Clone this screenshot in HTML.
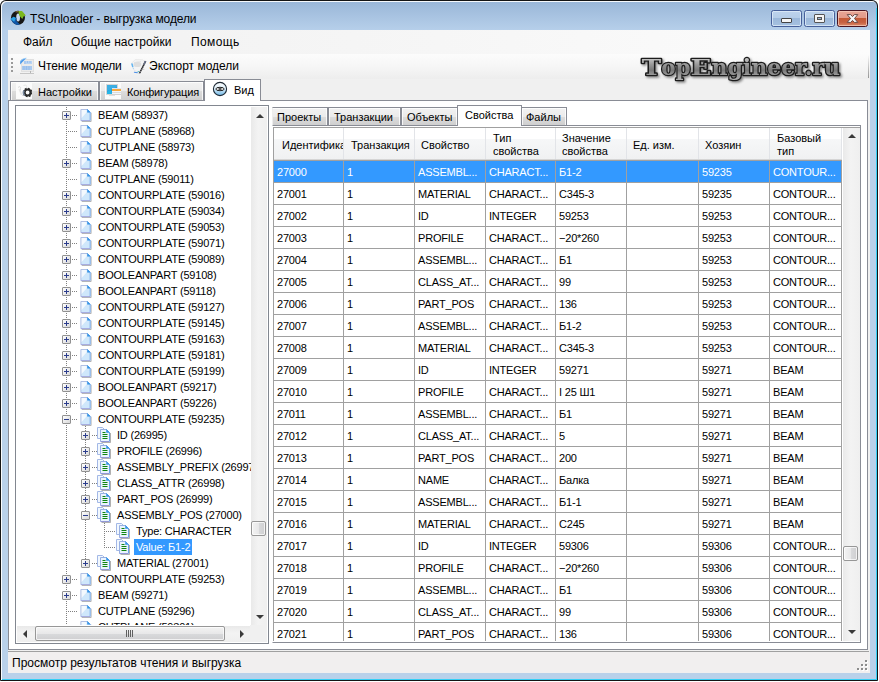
<!DOCTYPE html><html lang="ru"><head><meta charset="utf-8"><title>TSUnloader - выгрузка модели</title><style>
html,body{margin:0;padding:0;background:#fff;}
body{width:879px;height:682px;overflow:hidden;position:relative;font-family:"Liberation Sans",sans-serif;font-size:11px;color:#000;}
*{box-sizing:border-box;}
b,i{font-weight:normal;font-style:normal;display:block;}
.a{position:absolute;}
#win{position:absolute;left:0;top:0;width:878px;height:681px;background:linear-gradient(#9ab7d8 0,#9ab7d8 2px,#b6cfea 30px,#b9d1ea 60px);box-shadow:inset 0 0 0 1px #141414, inset 1px 1px 0 1px rgba(255,255,255,.9);border-radius:6px 6px 1px 1px;}
#ttl{letter-spacing:-0.1px;left:30px;top:12px;font-size:12px;line-height:14px;white-space:nowrap;}
#client{left:8px;top:30px;width:862px;height:643px;background:#f0f0f0;}
.ui{font-size:12px;line-height:14px;white-space:nowrap;position:absolute;}
#menu{left:8px;top:30px;width:862px;height:24px;background:linear-gradient(90deg,#f1f1f1,#f6f6f6 50%,#fcfcfc);}
#tool{left:8px;top:54px;width:862px;height:25px;background:linear-gradient(#fcfcfc,#f6f6f6 50%,#ededed);}
/* caption buttons */
.cb{position:absolute;top:10px;height:17px;border:1px solid #46609a;border-radius:2.5px;background:linear-gradient(#bdd3ec 0,#b5cde8 47%,#9bb8da 48%,#a6c1e0 100%);box-shadow:inset 0 0 0 1px rgba(225,238,250,.75);}
.cb.x{border-color:#4a1420;background:linear-gradient(#e8a696 0,#e29a88 47%,#c45a36 48%,#c66040 75%,#dc8a68 100%);box-shadow:inset 0 0 0 1px rgba(248,208,192,.7);}
/* tabs */
.tab{position:absolute;height:19px;border:1px solid #898c95;border-bottom:none;background:linear-gradient(#f2f2f2 0,#ebebeb 50%,#dddddd 51%,#cfcfcf 100%);box-shadow:inset 1px 1px 0 rgba(255,255,255,.8),inset -1px 0 0 rgba(255,255,255,.8);font-size:11px;line-height:13px;white-space:nowrap;}
.tab.on{background:#fff;box-shadow:none;}
.tab span{position:absolute;}
#page{left:8px;top:100px;width:860px;height:550px;background:#fff;border:1px solid #898c95;}
#page2{left:272px;top:125px;width:589px;height:518px;background:#fff;border:1px solid #898c95;border-left-color:#fff;}
/* tree */
#treeb{left:15px;top:105px;width:254px;height:539px;border:1px solid #828790;background:#fff;}
#tree{position:absolute;left:16px;top:106px;width:252px;height:537px;overflow:hidden;background:#fff;}
#tree .tx{letter-spacing:-0.2px;position:absolute;height:16px;line-height:16px;padding:0 3px;white-space:nowrap;font-size:11px;}
#tree .tx.sel{background:#3399ff;color:#fff;padding:0 2px;}
#tree .hl{position:absolute;height:1px;background-image:linear-gradient(90deg,#808080 50%,transparent 50%);background-size:2px 1px;}
#tree .vl{position:absolute;width:1px;background-image:linear-gradient(#808080 50%,transparent 50%);background-size:1px 2px;}
#tree .bx{position:absolute;width:9px;height:9px;border:1px solid #919191;border-radius:1px;background:linear-gradient(135deg,#fff,#d8d8d8);}
#tree .bx:before{content:"";position:absolute;left:1px;top:3px;width:5px;height:1px;background:#2b3c8c;}
#tree .bx.p:after{content:"";position:absolute;left:3px;top:1px;width:1px;height:5px;background:#2b3c8c;}
#tree .ic{position:absolute;width:12px;height:13px;}
/* grid */
#grid{position:absolute;left:273px;top:127px;width:587px;height:514px;overflow:hidden;background:#fff;border-left:1px solid #a0a0a0;border-top:1px solid #a0a0a0;}
#grid .hd{position:absolute;top:0;height:31px;background:linear-gradient(#fff 0,#fff 36%,#f6f7f8 37%,#f0f1f2 100%);border-right:1px solid #e2e4e8;font-size:11px;line-height:13px;white-space:nowrap;overflow:hidden;}
#grid .hd span{position:absolute;left:8px;top:11px;}
#grid .hd.two span{top:4px;}
#grid .rw{position:absolute;left:0;width:568px;height:22px;border-bottom:1px solid #a0a0a0;}
#grid .rw.sel{background:#3399ff;color:#fff;}
#grid .c{letter-spacing:-0.2px;position:absolute;top:0;height:21px;line-height:22.5px;padding-left:3px;white-space:nowrap;overflow:hidden;font-size:11px;}
#grid .gl{position:absolute;top:33px;width:1px;height:481px;background:#a0a0a0;}
#status{left:8px;top:651px;width:861px;height:22px;background:#f1efef;border-top:1px solid #a0a0a0;}
/* scrollbars */
.sb{position:absolute;background:#f0f0f0;}
.thumb{position:absolute;border:1px solid #979797;border-radius:2px;background:linear-gradient(90deg,#f3f3f3 0,#e8e8e9 50%,#d9dadc 51%,#cfcfd1 100%);box-shadow:inset 0 0 0 1px rgba(255,255,255,.7);}
.thumbh{position:absolute;border:1px solid #979797;border-radius:2px;background:linear-gradient(#f3f3f3 0,#e8e8e9 50%,#d9dadc 51%,#cfcfd1 100%);box-shadow:inset 0 0 0 1px rgba(255,255,255,.7);}
.ar{position:absolute;width:0;height:0;border:4px solid transparent;}

</style></head><body>
<div id="win"></div>
<i class="a" style="left:876px;top:8px;width:1px;height:672px;background:#35cff5"></i>
<i class="a" style="left:2px;top:679px;width:875px;height:1px;background:#35cff5"></i>
<svg class="a" style="left:9px;top:9px" width="18" height="18" viewBox="0 0 18 18"><circle cx="9" cy="8.8" r="7" fill="#161616"/><ellipse cx="9.1" cy="8.6" rx="1.9" ry="4" fill="#c6d7eb"/><path d="M9.3 1.9L13 2.1L16.9 6.6L14.7 7.2L13.3 9.9L10.6 7L9.7 4.2Z" fill="#7cb81e"/><path d="M1.5 10L4.6 7.7L7.6 9L7.4 12L9.8 14.2L11 15.6L7.6 15.9L4.2 13.8Z" fill="#0f56a8"/><path d="M1.5 10L4.6 7.7L6.8 9L5.2 12.8Z" fill="#2aa3e4"/><path d="M6.2 2.6L9 1.9L9.5 3.2L6.8 3.6Z" fill="#8a6a3a"/></svg>
<div id="ttl" class="a">TSUnloader - выгрузка модели</div>
<div class="cb" style="left:771px;width:31px"><i class="a" style="left:9px;top:7px;width:11px;height:5px;background:#f6f6f6;border:1px solid #444;border-radius:1px"></i></div>
<div class="cb" style="left:804px;width:31px"><i class="a" style="left:9px;top:3px;width:11px;height:9px;background:#f4f4f4;border:1px solid #555;border-radius:1px"></i><i class="a" style="left:12px;top:6px;width:5px;height:3px;background:#9db6d6;border:1px solid #555"></i></div>
<div class="cb x" style="left:837px;width:31px"><svg class="a" style="left:8px;top:2px" width="13" height="11" viewBox="0 0 13 11"><path d="M1.2 1.6H4.7L6.5 3.6L8.3 1.6H11.8L8.5 5.5L11.8 9.4H8.3L6.5 7.4L4.7 9.4H1.2L4.5 5.5Z" fill="#f6f6f6" stroke="#6a4a46" stroke-width="1" stroke-linejoin="round"/></svg></div>
<div id="client" class="a"></div>
<div id="menu" class="a"></div>
<div class="ui" style="left:23px;top:35px">Файл</div>
<div class="ui" style="left:71px;top:35px;letter-spacing:.06px">Общие настройки</div>
<div class="ui" style="left:191px;top:35px;letter-spacing:.4px">Помощь</div>
<div id="tool" class="a"></div>
<i class="a" style="left:868px;top:55px;width:1px;height:23px;background:linear-gradient(rgba(150,150,150,0),rgba(140,140,140,.9))"></i>
<i class="a" style="left:11px;top:58px;width:2px;height:16px;background-image:linear-gradient(#9a9a9a 50%,transparent 50%);background-size:2px 4px;"></i>
<div class="ui" style="left:38px;top:59px;letter-spacing:-0.1px">Чтение модели</div>
<div class="ui" style="left:149px;top:59px">Экспорт модели</div>
<svg id="logo" class="a" style="left:630px;top:45px" width="230" height="46" viewBox="0 0 230 46"><defs><linearGradient id="lg" x1="0" y1="0" x2="0" y2="46" gradientUnits="userSpaceOnUse"><stop offset=".26" stop-color="#d0d0d0"/><stop offset=".42" stop-color="#9a9a9a"/><stop offset=".55" stop-color="#787878"/><stop offset=".66" stop-color="#9c9c9c"/><stop offset=".8" stop-color="#b8b8b8"/></linearGradient><filter id="ls" x="-5%" y="-20%" width="110%" height="150%"><feDropShadow dx="1.5" dy="1.5" stdDeviation="1.2" flood-color="#000" flood-opacity=".45"/></filter></defs><text y="29.6" font-family="'DejaVu Serif','Liberation Serif',serif" font-weight="bold" font-size="22.5" fill="url(#lg)" stroke="#1c1c1c" stroke-width="2.6" stroke-linejoin="round" paint-order="stroke" filter="url(#ls)"><tspan x="11.8" textLength="19.4" lengthAdjust="spacingAndGlyphs">T</tspan><tspan x="31.2" textLength="29.4" lengthAdjust="spacingAndGlyphs">op</tspan><tspan x="60.6" textLength="20.8" lengthAdjust="spacingAndGlyphs">E</tspan><tspan x="81.4" textLength="128.6" lengthAdjust="spacingAndGlyphs">ngineer.ru</tspan></text></svg>
<div id="page" class="a"></div>
<div class="tab" style="left:10px;top:81px;width:89px"><span style="left:27px;top:4px">Настройки</span></div>
<div class="tab" style="left:99px;top:81px;width:105px"><span style="left:27px;top:4px;letter-spacing:-0.15px">Конфигурация</span></div>
<div class="tab on" style="left:204px;top:79px;width:57px;height:22px"><span style="left:29px;top:4px">Вид</span></div>
<div id="treeb" class="a"></div>
<div id="page2" class="a"></div>
<div class="tab" style="left:272px;top:107px;width:56px;height:18px;border-left-color:#ededed;box-shadow:inset -1px 0 0 rgba(255,255,255,.8),inset 0 1px 0 rgba(255,255,255,.8)"><span style="left:4px;top:3px">Проекты</span></div>
<div class="tab" style="left:328px;top:107px;width:73px;height:18px"><span style="left:5px;top:3px">Транзакции</span></div>
<div class="tab" style="left:401px;top:107px;width:57px;height:18px"><span style="left:5px;top:3px">Объекты</span></div>
<div class="tab" style="left:521px;top:107px;width:46px;height:18px"><span style="left:4px;top:3px">Файлы</span></div>
<div class="tab on" style="left:457px;top:105px;width:65px;height:21px"><span style="left:7px;top:3px">Свойства</span></div>

<svg class="a" style="left:19px;top:57px" width="17" height="18" viewBox="0 0 17 18"><rect x="2" y="2" width="13" height="13" fill="#ebebeb"/><rect x="2.5" y="2.5" width="12" height="12" fill="none" stroke="#e0e0e0"/><rect x="5" y="4" width="8" height="3" fill="#b9d4f3"/><rect x="3" y="9" width="10" height="4" fill="#a9c9ef"/><path d="M6 4V7M8.5 4V6M11 4V6M5 9V13M7.5 9V13M10 9V13" stroke="#8fb8ea" stroke-width=".7"/><path d="M1 7.6L1.3 3.9Q3.5 1.5 7.4 1.1Z" fill="#4797ea"/><path d="M1.3 3.9Q3.5 1.5 7.4 1.1" stroke="#9ccdf6" stroke-width=".8" fill="none"/><rect x="1" y="16" width="14" height="1" fill="#c6c6c6"/><rect x="11" y="14" width="1" height="2" fill="#b4b4b4"/></svg>
<svg class="a" style="left:130px;top:57px" width="18" height="18" viewBox="0 0 18 18"><path d="M1.6 6.2L5.2 2.6L12.6 2.8L15 5L9.4 15.4L4.2 13.4Z" fill="#f4f4f4" stroke="#e6e6e6" stroke-width=".8"/><ellipse cx="7.4" cy="7.4" rx="3.8" ry="2.6" fill="#d9d9d9" opacity=".85"/><path d="M4 5.6L11 4.6" stroke="#e0e0e0" stroke-width=".8"/><path d="M2 7L2.7 9.6" stroke="#62b4f0" stroke-width="1.5" stroke-linecap="round"/><circle cx="3.4" cy="11.6" r=".7" fill="#a8d4f8"/><path d="M4.4 15.2L7.4 15.7" stroke="#4a8ee6" stroke-width="1.1" stroke-linecap="round"/><circle cx="8.3" cy="14.6" r=".7" fill="#3cbcc4"/><path d="M15.6 4.2L9.4 16.6" stroke="#2c2c30" stroke-width="1.6" stroke-dasharray="1.5 .45"/><path d="M15.6 4.2L13.9 7.6" stroke="#66708a" stroke-width="1.6" stroke-dasharray="1.5 .45"/><path d="M13 12.4H14.4" stroke="#cfcfcf"/></svg>
<svg class="a" style="left:16px;top:83px" width="16" height="16" viewBox="0 0 16 16"><rect width="16" height="16" fill="#fbfbfb"/><path d="M2 4.5C3.5 3 5 3.5 4.5 5.5C4 8 5 11 7 13" fill="none" stroke="#dadada" stroke-width="1"/><path d="M7.5 2.5C10 1.5 11.5 2.5 10.5 4.5" fill="none" stroke="#e2e2e2" stroke-width=".8"/><path d="M3 6L5.5 12" stroke="#e6e6e6" stroke-width="1.2"/><circle cx="11.6" cy="9.5" r="3" fill="none" stroke="#2b2b2b" stroke-width="2.2"/><circle cx="11.6" cy="9.5" r="4.1" fill="none" stroke="#2b2b2b" stroke-width="1.4" stroke-dasharray="1.7 1.5"/><path d="M8.2 7.5A4 4 0 0 0 8.6 12.6" fill="none" stroke="#76869c" stroke-width="1.4"/></svg>
<svg class="a" style="left:105px;top:83px" width="16" height="16" viewBox="0 0 16 16"><rect width="16" height="16" fill="#fbfbfb"/><rect x="1.5" y="1.5" width="11" height="10" fill="#2f95d6" stroke="#d6d6d6"/><path d="M2 2H12V4L2 8Z" fill="#3fb4e6" opacity=".8"/><path d="M2 9L6 6L7 11H2Z" fill="#1fc4ee" opacity=".7"/><rect x="7" y="6" width="9" height="2" fill="#f8a93c"/><rect x="7" y="5" width="9" height="1" fill="#d8e6f4"/><rect x="7" y="8" width="9" height="3" fill="#f1f5fb"/><rect x="7" y="9" width="9" height="1" fill="#dcdcdc"/><rect x="7" y="11" width="9" height="1" fill="#d0d0d0"/><rect x="4" y="12" width="6" height="1" fill="#e0e0e0"/></svg>
<svg class="a" style="left:212px;top:81px" width="16" height="16" viewBox="0 0 16 16"><defs><linearGradient id="eg" x1="0" y1="0" x2="0" y2="1"><stop offset="0" stop-color="#ffffff"/><stop offset=".45" stop-color="#dff0fa"/><stop offset="1" stop-color="#6fb7e6"/></linearGradient></defs><circle cx="8" cy="8" r="6.6" fill="url(#eg)" stroke="#1e2a36" stroke-width="1.1"/><ellipse cx="8" cy="8" rx="4.2" ry="1.7" fill="#f4f4f4" stroke="#222" stroke-width="1"/><ellipse cx="8" cy="8" rx="1.7" ry="1.3" fill="#555"/></svg>
<div id="status" class="a"></div>
<i class="a" style="left:866px;top:661px;width:2px;height:2px;background:#fff"></i><i class="a" style="left:865px;top:660px;width:2px;height:2px;background:#8c8c8c"></i><i class="a" style="left:862px;top:665px;width:2px;height:2px;background:#fff"></i><i class="a" style="left:861px;top:664px;width:2px;height:2px;background:#8c8c8c"></i><i class="a" style="left:866px;top:665px;width:2px;height:2px;background:#fff"></i><i class="a" style="left:865px;top:664px;width:2px;height:2px;background:#8c8c8c"></i><i class="a" style="left:858px;top:669px;width:2px;height:2px;background:#fff"></i><i class="a" style="left:857px;top:668px;width:2px;height:2px;background:#8c8c8c"></i><i class="a" style="left:862px;top:669px;width:2px;height:2px;background:#fff"></i><i class="a" style="left:861px;top:668px;width:2px;height:2px;background:#8c8c8c"></i><i class="a" style="left:866px;top:669px;width:2px;height:2px;background:#fff"></i><i class="a" style="left:865px;top:668px;width:2px;height:2px;background:#8c8c8c"></i>
<div class="ui" style="left:12px;top:656px">Просмотр результатов чтения и выгрузка</div>

<div id="tree">
<i class="vl" style="left:50px;top:1px;height:535px"></i>
<i class="vl" style="left:69px;top:320px;height:138px"></i>
<i class="vl" style="left:88px;top:415px;height:27px"></i>

<i class="hl" style="left:56px;top:9px;width:5px"></i>
<b class="bx p" style="left:46px;top:5px"></b>
<svg class="ic" style="left:64px;top:3px" width="12" height="14" viewBox="0 0 12 14"><path d="M1.5 13.5H11.5V4" fill="none" stroke="#9c9c9c" stroke-opacity=".8"/><path d="M.5 .5H7.5L10.5 3.5V12.5H.5Z" fill="#cfe7fb"/><path d="M.5 .5H7.5L8.5 1.5L.5 10.5Z" fill="#f4f9fe"/><path d="M.5 12.5V.5H7.5" fill="none" stroke="#a9b9e0"/><path d="M7.5 .5L10.5 3.5V12.5" fill="none" stroke="#6fa8ea"/><path d="M.5 12.5H10.5" fill="none" stroke="#9aa0dc"/><path d="M7.5 .5V3.5H10.5Z" fill="#3a94e6" stroke="#3a94e6" stroke-width=".6"/></svg>
<span class="tx" style="left:79px;top:1px">BEAM (58937)</span>
<i class="hl" style="left:52px;top:25px;width:9px"></i>
<svg class="ic" style="left:64px;top:19px" width="12" height="14" viewBox="0 0 12 14"><path d="M1.5 13.5H11.5V4" fill="none" stroke="#9c9c9c" stroke-opacity=".8"/><path d="M.5 .5H7.5L10.5 3.5V12.5H.5Z" fill="#cfe7fb"/><path d="M.5 .5H7.5L8.5 1.5L.5 10.5Z" fill="#f4f9fe"/><path d="M.5 12.5V.5H7.5" fill="none" stroke="#a9b9e0"/><path d="M7.5 .5L10.5 3.5V12.5" fill="none" stroke="#6fa8ea"/><path d="M.5 12.5H10.5" fill="none" stroke="#9aa0dc"/><path d="M7.5 .5V3.5H10.5Z" fill="#3a94e6" stroke="#3a94e6" stroke-width=".6"/></svg>
<span class="tx" style="left:79px;top:17px">CUTPLANE (58968)</span>
<i class="hl" style="left:52px;top:41px;width:9px"></i>
<svg class="ic" style="left:64px;top:35px" width="12" height="14" viewBox="0 0 12 14"><path d="M1.5 13.5H11.5V4" fill="none" stroke="#9c9c9c" stroke-opacity=".8"/><path d="M.5 .5H7.5L10.5 3.5V12.5H.5Z" fill="#cfe7fb"/><path d="M.5 .5H7.5L8.5 1.5L.5 10.5Z" fill="#f4f9fe"/><path d="M.5 12.5V.5H7.5" fill="none" stroke="#a9b9e0"/><path d="M7.5 .5L10.5 3.5V12.5" fill="none" stroke="#6fa8ea"/><path d="M.5 12.5H10.5" fill="none" stroke="#9aa0dc"/><path d="M7.5 .5V3.5H10.5Z" fill="#3a94e6" stroke="#3a94e6" stroke-width=".6"/></svg>
<span class="tx" style="left:79px;top:33px">CUTPLANE (58973)</span>
<i class="hl" style="left:56px;top:57px;width:5px"></i>
<b class="bx p" style="left:46px;top:53px"></b>
<svg class="ic" style="left:64px;top:51px" width="12" height="14" viewBox="0 0 12 14"><path d="M1.5 13.5H11.5V4" fill="none" stroke="#9c9c9c" stroke-opacity=".8"/><path d="M.5 .5H7.5L10.5 3.5V12.5H.5Z" fill="#cfe7fb"/><path d="M.5 .5H7.5L8.5 1.5L.5 10.5Z" fill="#f4f9fe"/><path d="M.5 12.5V.5H7.5" fill="none" stroke="#a9b9e0"/><path d="M7.5 .5L10.5 3.5V12.5" fill="none" stroke="#6fa8ea"/><path d="M.5 12.5H10.5" fill="none" stroke="#9aa0dc"/><path d="M7.5 .5V3.5H10.5Z" fill="#3a94e6" stroke="#3a94e6" stroke-width=".6"/></svg>
<span class="tx" style="left:79px;top:49px">BEAM (58978)</span>
<i class="hl" style="left:52px;top:73px;width:9px"></i>
<svg class="ic" style="left:64px;top:67px" width="12" height="14" viewBox="0 0 12 14"><path d="M1.5 13.5H11.5V4" fill="none" stroke="#9c9c9c" stroke-opacity=".8"/><path d="M.5 .5H7.5L10.5 3.5V12.5H.5Z" fill="#cfe7fb"/><path d="M.5 .5H7.5L8.5 1.5L.5 10.5Z" fill="#f4f9fe"/><path d="M.5 12.5V.5H7.5" fill="none" stroke="#a9b9e0"/><path d="M7.5 .5L10.5 3.5V12.5" fill="none" stroke="#6fa8ea"/><path d="M.5 12.5H10.5" fill="none" stroke="#9aa0dc"/><path d="M7.5 .5V3.5H10.5Z" fill="#3a94e6" stroke="#3a94e6" stroke-width=".6"/></svg>
<span class="tx" style="left:79px;top:65px">CUTPLANE (59011)</span>
<i class="hl" style="left:56px;top:89px;width:5px"></i>
<b class="bx p" style="left:46px;top:85px"></b>
<svg class="ic" style="left:64px;top:83px" width="12" height="14" viewBox="0 0 12 14"><path d="M1.5 13.5H11.5V4" fill="none" stroke="#9c9c9c" stroke-opacity=".8"/><path d="M.5 .5H7.5L10.5 3.5V12.5H.5Z" fill="#cfe7fb"/><path d="M.5 .5H7.5L8.5 1.5L.5 10.5Z" fill="#f4f9fe"/><path d="M.5 12.5V.5H7.5" fill="none" stroke="#a9b9e0"/><path d="M7.5 .5L10.5 3.5V12.5" fill="none" stroke="#6fa8ea"/><path d="M.5 12.5H10.5" fill="none" stroke="#9aa0dc"/><path d="M7.5 .5V3.5H10.5Z" fill="#3a94e6" stroke="#3a94e6" stroke-width=".6"/></svg>
<span class="tx" style="left:79px;top:81px">CONTOURPLATE (59016)</span>
<i class="hl" style="left:56px;top:105px;width:5px"></i>
<b class="bx p" style="left:46px;top:101px"></b>
<svg class="ic" style="left:64px;top:99px" width="12" height="14" viewBox="0 0 12 14"><path d="M1.5 13.5H11.5V4" fill="none" stroke="#9c9c9c" stroke-opacity=".8"/><path d="M.5 .5H7.5L10.5 3.5V12.5H.5Z" fill="#cfe7fb"/><path d="M.5 .5H7.5L8.5 1.5L.5 10.5Z" fill="#f4f9fe"/><path d="M.5 12.5V.5H7.5" fill="none" stroke="#a9b9e0"/><path d="M7.5 .5L10.5 3.5V12.5" fill="none" stroke="#6fa8ea"/><path d="M.5 12.5H10.5" fill="none" stroke="#9aa0dc"/><path d="M7.5 .5V3.5H10.5Z" fill="#3a94e6" stroke="#3a94e6" stroke-width=".6"/></svg>
<span class="tx" style="left:79px;top:97px">CONTOURPLATE (59034)</span>
<i class="hl" style="left:56px;top:121px;width:5px"></i>
<b class="bx p" style="left:46px;top:117px"></b>
<svg class="ic" style="left:64px;top:115px" width="12" height="14" viewBox="0 0 12 14"><path d="M1.5 13.5H11.5V4" fill="none" stroke="#9c9c9c" stroke-opacity=".8"/><path d="M.5 .5H7.5L10.5 3.5V12.5H.5Z" fill="#cfe7fb"/><path d="M.5 .5H7.5L8.5 1.5L.5 10.5Z" fill="#f4f9fe"/><path d="M.5 12.5V.5H7.5" fill="none" stroke="#a9b9e0"/><path d="M7.5 .5L10.5 3.5V12.5" fill="none" stroke="#6fa8ea"/><path d="M.5 12.5H10.5" fill="none" stroke="#9aa0dc"/><path d="M7.5 .5V3.5H10.5Z" fill="#3a94e6" stroke="#3a94e6" stroke-width=".6"/></svg>
<span class="tx" style="left:79px;top:113px">CONTOURPLATE (59053)</span>
<i class="hl" style="left:56px;top:137px;width:5px"></i>
<b class="bx p" style="left:46px;top:133px"></b>
<svg class="ic" style="left:64px;top:131px" width="12" height="14" viewBox="0 0 12 14"><path d="M1.5 13.5H11.5V4" fill="none" stroke="#9c9c9c" stroke-opacity=".8"/><path d="M.5 .5H7.5L10.5 3.5V12.5H.5Z" fill="#cfe7fb"/><path d="M.5 .5H7.5L8.5 1.5L.5 10.5Z" fill="#f4f9fe"/><path d="M.5 12.5V.5H7.5" fill="none" stroke="#a9b9e0"/><path d="M7.5 .5L10.5 3.5V12.5" fill="none" stroke="#6fa8ea"/><path d="M.5 12.5H10.5" fill="none" stroke="#9aa0dc"/><path d="M7.5 .5V3.5H10.5Z" fill="#3a94e6" stroke="#3a94e6" stroke-width=".6"/></svg>
<span class="tx" style="left:79px;top:129px">CONTOURPLATE (59071)</span>
<i class="hl" style="left:56px;top:153px;width:5px"></i>
<b class="bx p" style="left:46px;top:149px"></b>
<svg class="ic" style="left:64px;top:147px" width="12" height="14" viewBox="0 0 12 14"><path d="M1.5 13.5H11.5V4" fill="none" stroke="#9c9c9c" stroke-opacity=".8"/><path d="M.5 .5H7.5L10.5 3.5V12.5H.5Z" fill="#cfe7fb"/><path d="M.5 .5H7.5L8.5 1.5L.5 10.5Z" fill="#f4f9fe"/><path d="M.5 12.5V.5H7.5" fill="none" stroke="#a9b9e0"/><path d="M7.5 .5L10.5 3.5V12.5" fill="none" stroke="#6fa8ea"/><path d="M.5 12.5H10.5" fill="none" stroke="#9aa0dc"/><path d="M7.5 .5V3.5H10.5Z" fill="#3a94e6" stroke="#3a94e6" stroke-width=".6"/></svg>
<span class="tx" style="left:79px;top:145px">CONTOURPLATE (59089)</span>
<i class="hl" style="left:56px;top:169px;width:5px"></i>
<b class="bx p" style="left:46px;top:165px"></b>
<svg class="ic" style="left:64px;top:163px" width="12" height="14" viewBox="0 0 12 14"><path d="M1.5 13.5H11.5V4" fill="none" stroke="#9c9c9c" stroke-opacity=".8"/><path d="M.5 .5H7.5L10.5 3.5V12.5H.5Z" fill="#cfe7fb"/><path d="M.5 .5H7.5L8.5 1.5L.5 10.5Z" fill="#f4f9fe"/><path d="M.5 12.5V.5H7.5" fill="none" stroke="#a9b9e0"/><path d="M7.5 .5L10.5 3.5V12.5" fill="none" stroke="#6fa8ea"/><path d="M.5 12.5H10.5" fill="none" stroke="#9aa0dc"/><path d="M7.5 .5V3.5H10.5Z" fill="#3a94e6" stroke="#3a94e6" stroke-width=".6"/></svg>
<span class="tx" style="left:79px;top:161px">BOOLEANPART (59108)</span>
<i class="hl" style="left:56px;top:185px;width:5px"></i>
<b class="bx p" style="left:46px;top:181px"></b>
<svg class="ic" style="left:64px;top:179px" width="12" height="14" viewBox="0 0 12 14"><path d="M1.5 13.5H11.5V4" fill="none" stroke="#9c9c9c" stroke-opacity=".8"/><path d="M.5 .5H7.5L10.5 3.5V12.5H.5Z" fill="#cfe7fb"/><path d="M.5 .5H7.5L8.5 1.5L.5 10.5Z" fill="#f4f9fe"/><path d="M.5 12.5V.5H7.5" fill="none" stroke="#a9b9e0"/><path d="M7.5 .5L10.5 3.5V12.5" fill="none" stroke="#6fa8ea"/><path d="M.5 12.5H10.5" fill="none" stroke="#9aa0dc"/><path d="M7.5 .5V3.5H10.5Z" fill="#3a94e6" stroke="#3a94e6" stroke-width=".6"/></svg>
<span class="tx" style="left:79px;top:177px">BOOLEANPART (59118)</span>
<i class="hl" style="left:56px;top:201px;width:5px"></i>
<b class="bx p" style="left:46px;top:197px"></b>
<svg class="ic" style="left:64px;top:195px" width="12" height="14" viewBox="0 0 12 14"><path d="M1.5 13.5H11.5V4" fill="none" stroke="#9c9c9c" stroke-opacity=".8"/><path d="M.5 .5H7.5L10.5 3.5V12.5H.5Z" fill="#cfe7fb"/><path d="M.5 .5H7.5L8.5 1.5L.5 10.5Z" fill="#f4f9fe"/><path d="M.5 12.5V.5H7.5" fill="none" stroke="#a9b9e0"/><path d="M7.5 .5L10.5 3.5V12.5" fill="none" stroke="#6fa8ea"/><path d="M.5 12.5H10.5" fill="none" stroke="#9aa0dc"/><path d="M7.5 .5V3.5H10.5Z" fill="#3a94e6" stroke="#3a94e6" stroke-width=".6"/></svg>
<span class="tx" style="left:79px;top:193px">CONTOURPLATE (59127)</span>
<i class="hl" style="left:56px;top:217px;width:5px"></i>
<b class="bx p" style="left:46px;top:213px"></b>
<svg class="ic" style="left:64px;top:211px" width="12" height="14" viewBox="0 0 12 14"><path d="M1.5 13.5H11.5V4" fill="none" stroke="#9c9c9c" stroke-opacity=".8"/><path d="M.5 .5H7.5L10.5 3.5V12.5H.5Z" fill="#cfe7fb"/><path d="M.5 .5H7.5L8.5 1.5L.5 10.5Z" fill="#f4f9fe"/><path d="M.5 12.5V.5H7.5" fill="none" stroke="#a9b9e0"/><path d="M7.5 .5L10.5 3.5V12.5" fill="none" stroke="#6fa8ea"/><path d="M.5 12.5H10.5" fill="none" stroke="#9aa0dc"/><path d="M7.5 .5V3.5H10.5Z" fill="#3a94e6" stroke="#3a94e6" stroke-width=".6"/></svg>
<span class="tx" style="left:79px;top:209px">CONTOURPLATE (59145)</span>
<i class="hl" style="left:56px;top:233px;width:5px"></i>
<b class="bx p" style="left:46px;top:229px"></b>
<svg class="ic" style="left:64px;top:227px" width="12" height="14" viewBox="0 0 12 14"><path d="M1.5 13.5H11.5V4" fill="none" stroke="#9c9c9c" stroke-opacity=".8"/><path d="M.5 .5H7.5L10.5 3.5V12.5H.5Z" fill="#cfe7fb"/><path d="M.5 .5H7.5L8.5 1.5L.5 10.5Z" fill="#f4f9fe"/><path d="M.5 12.5V.5H7.5" fill="none" stroke="#a9b9e0"/><path d="M7.5 .5L10.5 3.5V12.5" fill="none" stroke="#6fa8ea"/><path d="M.5 12.5H10.5" fill="none" stroke="#9aa0dc"/><path d="M7.5 .5V3.5H10.5Z" fill="#3a94e6" stroke="#3a94e6" stroke-width=".6"/></svg>
<span class="tx" style="left:79px;top:225px">CONTOURPLATE (59163)</span>
<i class="hl" style="left:56px;top:249px;width:5px"></i>
<b class="bx p" style="left:46px;top:245px"></b>
<svg class="ic" style="left:64px;top:243px" width="12" height="14" viewBox="0 0 12 14"><path d="M1.5 13.5H11.5V4" fill="none" stroke="#9c9c9c" stroke-opacity=".8"/><path d="M.5 .5H7.5L10.5 3.5V12.5H.5Z" fill="#cfe7fb"/><path d="M.5 .5H7.5L8.5 1.5L.5 10.5Z" fill="#f4f9fe"/><path d="M.5 12.5V.5H7.5" fill="none" stroke="#a9b9e0"/><path d="M7.5 .5L10.5 3.5V12.5" fill="none" stroke="#6fa8ea"/><path d="M.5 12.5H10.5" fill="none" stroke="#9aa0dc"/><path d="M7.5 .5V3.5H10.5Z" fill="#3a94e6" stroke="#3a94e6" stroke-width=".6"/></svg>
<span class="tx" style="left:79px;top:241px">CONTOURPLATE (59181)</span>
<i class="hl" style="left:56px;top:265px;width:5px"></i>
<b class="bx p" style="left:46px;top:261px"></b>
<svg class="ic" style="left:64px;top:259px" width="12" height="14" viewBox="0 0 12 14"><path d="M1.5 13.5H11.5V4" fill="none" stroke="#9c9c9c" stroke-opacity=".8"/><path d="M.5 .5H7.5L10.5 3.5V12.5H.5Z" fill="#cfe7fb"/><path d="M.5 .5H7.5L8.5 1.5L.5 10.5Z" fill="#f4f9fe"/><path d="M.5 12.5V.5H7.5" fill="none" stroke="#a9b9e0"/><path d="M7.5 .5L10.5 3.5V12.5" fill="none" stroke="#6fa8ea"/><path d="M.5 12.5H10.5" fill="none" stroke="#9aa0dc"/><path d="M7.5 .5V3.5H10.5Z" fill="#3a94e6" stroke="#3a94e6" stroke-width=".6"/></svg>
<span class="tx" style="left:79px;top:257px">CONTOURPLATE (59199)</span>
<i class="hl" style="left:56px;top:281px;width:5px"></i>
<b class="bx p" style="left:46px;top:277px"></b>
<svg class="ic" style="left:64px;top:275px" width="12" height="14" viewBox="0 0 12 14"><path d="M1.5 13.5H11.5V4" fill="none" stroke="#9c9c9c" stroke-opacity=".8"/><path d="M.5 .5H7.5L10.5 3.5V12.5H.5Z" fill="#cfe7fb"/><path d="M.5 .5H7.5L8.5 1.5L.5 10.5Z" fill="#f4f9fe"/><path d="M.5 12.5V.5H7.5" fill="none" stroke="#a9b9e0"/><path d="M7.5 .5L10.5 3.5V12.5" fill="none" stroke="#6fa8ea"/><path d="M.5 12.5H10.5" fill="none" stroke="#9aa0dc"/><path d="M7.5 .5V3.5H10.5Z" fill="#3a94e6" stroke="#3a94e6" stroke-width=".6"/></svg>
<span class="tx" style="left:79px;top:273px">BOOLEANPART (59217)</span>
<i class="hl" style="left:56px;top:297px;width:5px"></i>
<b class="bx p" style="left:46px;top:293px"></b>
<svg class="ic" style="left:64px;top:291px" width="12" height="14" viewBox="0 0 12 14"><path d="M1.5 13.5H11.5V4" fill="none" stroke="#9c9c9c" stroke-opacity=".8"/><path d="M.5 .5H7.5L10.5 3.5V12.5H.5Z" fill="#cfe7fb"/><path d="M.5 .5H7.5L8.5 1.5L.5 10.5Z" fill="#f4f9fe"/><path d="M.5 12.5V.5H7.5" fill="none" stroke="#a9b9e0"/><path d="M7.5 .5L10.5 3.5V12.5" fill="none" stroke="#6fa8ea"/><path d="M.5 12.5H10.5" fill="none" stroke="#9aa0dc"/><path d="M7.5 .5V3.5H10.5Z" fill="#3a94e6" stroke="#3a94e6" stroke-width=".6"/></svg>
<span class="tx" style="left:79px;top:289px">BOOLEANPART (59226)</span>
<i class="hl" style="left:56px;top:313px;width:5px"></i>
<b class="bx m" style="left:46px;top:309px"></b>
<svg class="ic" style="left:64px;top:307px" width="12" height="14" viewBox="0 0 12 14"><path d="M1.5 13.5H11.5V4" fill="none" stroke="#9c9c9c" stroke-opacity=".8"/><path d="M.5 .5H7.5L10.5 3.5V12.5H.5Z" fill="#cfe7fb"/><path d="M.5 .5H7.5L8.5 1.5L.5 10.5Z" fill="#f4f9fe"/><path d="M.5 12.5V.5H7.5" fill="none" stroke="#a9b9e0"/><path d="M7.5 .5L10.5 3.5V12.5" fill="none" stroke="#6fa8ea"/><path d="M.5 12.5H10.5" fill="none" stroke="#9aa0dc"/><path d="M7.5 .5V3.5H10.5Z" fill="#3a94e6" stroke="#3a94e6" stroke-width=".6"/></svg>
<span class="tx" style="left:79px;top:305px">CONTOURPLATE (59235)</span>
<i class="hl" style="left:76px;top:329px;width:5px"></i>
<b class="bx p" style="left:65px;top:325px"></b>
<svg class="ic" style="left:81px;top:321px;width:14px;height:16px" width="14" height="16" viewBox="0 0 14 16"><path d="M.5 .5H5.5L8 3V11.5H.5Z" fill="#f2f8fe" stroke="#a3b8e6"/><path d="M4.5 15.5H13.5V6" fill="none" stroke="#9c9c9c" stroke-opacity=".8"/><path d="M3.5 2.5H9.5L12.5 5.5V14.5H3.5Z" fill="#eaf4fe"/><path d="M3.5 14.5V2.5H9.5" fill="none" stroke="#98b0e2"/><path d="M9.5 2.5L12.5 5.5V14.5" fill="none" stroke="#6aa4ea"/><path d="M3.5 14.5H12.5" fill="none" stroke="#9298d8"/><path d="M9.5 2.5V5.5H12.5Z" fill="#3a94e6" stroke="#3a94e6" stroke-width=".6"/><path d="M5.5 5.5H8.5M5.5 7.5H10.5M5.5 9.5H10.5M5.5 11.5H10.5" stroke="#0f860f" stroke-width="1.2"/></svg>
<span class="tx" style="left:98px;top:321px">ID (26995)</span>
<i class="hl" style="left:76px;top:345px;width:5px"></i>
<b class="bx p" style="left:65px;top:341px"></b>
<svg class="ic" style="left:81px;top:337px;width:14px;height:16px" width="14" height="16" viewBox="0 0 14 16"><path d="M.5 .5H5.5L8 3V11.5H.5Z" fill="#f2f8fe" stroke="#a3b8e6"/><path d="M4.5 15.5H13.5V6" fill="none" stroke="#9c9c9c" stroke-opacity=".8"/><path d="M3.5 2.5H9.5L12.5 5.5V14.5H3.5Z" fill="#eaf4fe"/><path d="M3.5 14.5V2.5H9.5" fill="none" stroke="#98b0e2"/><path d="M9.5 2.5L12.5 5.5V14.5" fill="none" stroke="#6aa4ea"/><path d="M3.5 14.5H12.5" fill="none" stroke="#9298d8"/><path d="M9.5 2.5V5.5H12.5Z" fill="#3a94e6" stroke="#3a94e6" stroke-width=".6"/><path d="M5.5 5.5H8.5M5.5 7.5H10.5M5.5 9.5H10.5M5.5 11.5H10.5" stroke="#0f860f" stroke-width="1.2"/></svg>
<span class="tx" style="left:98px;top:337px">PROFILE (26996)</span>
<i class="hl" style="left:76px;top:361px;width:5px"></i>
<b class="bx p" style="left:65px;top:357px"></b>
<svg class="ic" style="left:81px;top:353px;width:14px;height:16px" width="14" height="16" viewBox="0 0 14 16"><path d="M.5 .5H5.5L8 3V11.5H.5Z" fill="#f2f8fe" stroke="#a3b8e6"/><path d="M4.5 15.5H13.5V6" fill="none" stroke="#9c9c9c" stroke-opacity=".8"/><path d="M3.5 2.5H9.5L12.5 5.5V14.5H3.5Z" fill="#eaf4fe"/><path d="M3.5 14.5V2.5H9.5" fill="none" stroke="#98b0e2"/><path d="M9.5 2.5L12.5 5.5V14.5" fill="none" stroke="#6aa4ea"/><path d="M3.5 14.5H12.5" fill="none" stroke="#9298d8"/><path d="M9.5 2.5V5.5H12.5Z" fill="#3a94e6" stroke="#3a94e6" stroke-width=".6"/><path d="M5.5 5.5H8.5M5.5 7.5H10.5M5.5 9.5H10.5M5.5 11.5H10.5" stroke="#0f860f" stroke-width="1.2"/></svg>
<span class="tx" style="left:98px;top:353px">ASSEMBLY_PREFIX (26997)</span>
<i class="hl" style="left:76px;top:377px;width:5px"></i>
<b class="bx p" style="left:65px;top:373px"></b>
<svg class="ic" style="left:81px;top:369px;width:14px;height:16px" width="14" height="16" viewBox="0 0 14 16"><path d="M.5 .5H5.5L8 3V11.5H.5Z" fill="#f2f8fe" stroke="#a3b8e6"/><path d="M4.5 15.5H13.5V6" fill="none" stroke="#9c9c9c" stroke-opacity=".8"/><path d="M3.5 2.5H9.5L12.5 5.5V14.5H3.5Z" fill="#eaf4fe"/><path d="M3.5 14.5V2.5H9.5" fill="none" stroke="#98b0e2"/><path d="M9.5 2.5L12.5 5.5V14.5" fill="none" stroke="#6aa4ea"/><path d="M3.5 14.5H12.5" fill="none" stroke="#9298d8"/><path d="M9.5 2.5V5.5H12.5Z" fill="#3a94e6" stroke="#3a94e6" stroke-width=".6"/><path d="M5.5 5.5H8.5M5.5 7.5H10.5M5.5 9.5H10.5M5.5 11.5H10.5" stroke="#0f860f" stroke-width="1.2"/></svg>
<span class="tx" style="left:98px;top:369px">CLASS_ATTR (26998)</span>
<i class="hl" style="left:76px;top:393px;width:5px"></i>
<b class="bx p" style="left:65px;top:389px"></b>
<svg class="ic" style="left:81px;top:385px;width:14px;height:16px" width="14" height="16" viewBox="0 0 14 16"><path d="M.5 .5H5.5L8 3V11.5H.5Z" fill="#f2f8fe" stroke="#a3b8e6"/><path d="M4.5 15.5H13.5V6" fill="none" stroke="#9c9c9c" stroke-opacity=".8"/><path d="M3.5 2.5H9.5L12.5 5.5V14.5H3.5Z" fill="#eaf4fe"/><path d="M3.5 14.5V2.5H9.5" fill="none" stroke="#98b0e2"/><path d="M9.5 2.5L12.5 5.5V14.5" fill="none" stroke="#6aa4ea"/><path d="M3.5 14.5H12.5" fill="none" stroke="#9298d8"/><path d="M9.5 2.5V5.5H12.5Z" fill="#3a94e6" stroke="#3a94e6" stroke-width=".6"/><path d="M5.5 5.5H8.5M5.5 7.5H10.5M5.5 9.5H10.5M5.5 11.5H10.5" stroke="#0f860f" stroke-width="1.2"/></svg>
<span class="tx" style="left:98px;top:385px">PART_POS (26999)</span>
<i class="hl" style="left:76px;top:409px;width:5px"></i>
<b class="bx m" style="left:65px;top:405px"></b>
<svg class="ic" style="left:81px;top:401px;width:14px;height:16px" width="14" height="16" viewBox="0 0 14 16"><path d="M.5 .5H5.5L8 3V11.5H.5Z" fill="#f2f8fe" stroke="#a3b8e6"/><path d="M4.5 15.5H13.5V6" fill="none" stroke="#9c9c9c" stroke-opacity=".8"/><path d="M3.5 2.5H9.5L12.5 5.5V14.5H3.5Z" fill="#eaf4fe"/><path d="M3.5 14.5V2.5H9.5" fill="none" stroke="#98b0e2"/><path d="M9.5 2.5L12.5 5.5V14.5" fill="none" stroke="#6aa4ea"/><path d="M3.5 14.5H12.5" fill="none" stroke="#9298d8"/><path d="M9.5 2.5V5.5H12.5Z" fill="#3a94e6" stroke="#3a94e6" stroke-width=".6"/><path d="M5.5 5.5H8.5M5.5 7.5H10.5M5.5 9.5H10.5M5.5 11.5H10.5" stroke="#0f860f" stroke-width="1.2"/></svg>
<span class="tx" style="left:98px;top:401px">ASSEMBLY_POS (27000)</span>
<i class="hl" style="left:90px;top:425px;width:9px"></i>
<svg class="ic" style="left:100px;top:417px;width:14px;height:16px" width="14" height="16" viewBox="0 0 14 16"><path d="M.5 .5H5.5L8 3V11.5H.5Z" fill="#f2f8fe" stroke="#a3b8e6"/><path d="M4.5 15.5H13.5V6" fill="none" stroke="#9c9c9c" stroke-opacity=".8"/><path d="M3.5 2.5H9.5L12.5 5.5V14.5H3.5Z" fill="#eaf4fe"/><path d="M3.5 14.5V2.5H9.5" fill="none" stroke="#98b0e2"/><path d="M9.5 2.5L12.5 5.5V14.5" fill="none" stroke="#6aa4ea"/><path d="M3.5 14.5H12.5" fill="none" stroke="#9298d8"/><path d="M9.5 2.5V5.5H12.5Z" fill="#3a94e6" stroke="#3a94e6" stroke-width=".6"/><path d="M5.5 5.5H8.5M5.5 7.5H10.5M5.5 9.5H10.5M5.5 11.5H10.5" stroke="#0f860f" stroke-width="1.2"/></svg>
<span class="tx" style="left:117px;top:417px">Type: CHARACTER</span>
<i class="hl" style="left:90px;top:441px;width:9px"></i>
<svg class="ic" style="left:100px;top:433px;width:14px;height:16px" width="14" height="16" viewBox="0 0 14 16"><path d="M.5 .5H5.5L8 3V11.5H.5Z" fill="#f2f8fe" stroke="#a3b8e6"/><path d="M4.5 15.5H13.5V6" fill="none" stroke="#9c9c9c" stroke-opacity=".8"/><path d="M3.5 2.5H9.5L12.5 5.5V14.5H3.5Z" fill="#eaf4fe"/><path d="M3.5 14.5V2.5H9.5" fill="none" stroke="#98b0e2"/><path d="M9.5 2.5L12.5 5.5V14.5" fill="none" stroke="#6aa4ea"/><path d="M3.5 14.5H12.5" fill="none" stroke="#9298d8"/><path d="M9.5 2.5V5.5H12.5Z" fill="#3a94e6" stroke="#3a94e6" stroke-width=".6"/><path d="M5.5 5.5H8.5M5.5 7.5H10.5M5.5 9.5H10.5M5.5 11.5H10.5" stroke="#0f860f" stroke-width="1.2"/></svg>
<span class="tx sel" style="left:118px;top:433px">Value: Б1-2</span>
<i class="hl" style="left:76px;top:457px;width:5px"></i>
<b class="bx p" style="left:65px;top:453px"></b>
<svg class="ic" style="left:81px;top:449px;width:14px;height:16px" width="14" height="16" viewBox="0 0 14 16"><path d="M.5 .5H5.5L8 3V11.5H.5Z" fill="#f2f8fe" stroke="#a3b8e6"/><path d="M4.5 15.5H13.5V6" fill="none" stroke="#9c9c9c" stroke-opacity=".8"/><path d="M3.5 2.5H9.5L12.5 5.5V14.5H3.5Z" fill="#eaf4fe"/><path d="M3.5 14.5V2.5H9.5" fill="none" stroke="#98b0e2"/><path d="M9.5 2.5L12.5 5.5V14.5" fill="none" stroke="#6aa4ea"/><path d="M3.5 14.5H12.5" fill="none" stroke="#9298d8"/><path d="M9.5 2.5V5.5H12.5Z" fill="#3a94e6" stroke="#3a94e6" stroke-width=".6"/><path d="M5.5 5.5H8.5M5.5 7.5H10.5M5.5 9.5H10.5M5.5 11.5H10.5" stroke="#0f860f" stroke-width="1.2"/></svg>
<span class="tx" style="left:98px;top:449px">MATERIAL (27001)</span>
<i class="hl" style="left:56px;top:473px;width:5px"></i>
<b class="bx p" style="left:46px;top:469px"></b>
<svg class="ic" style="left:64px;top:467px" width="12" height="14" viewBox="0 0 12 14"><path d="M1.5 13.5H11.5V4" fill="none" stroke="#9c9c9c" stroke-opacity=".8"/><path d="M.5 .5H7.5L10.5 3.5V12.5H.5Z" fill="#cfe7fb"/><path d="M.5 .5H7.5L8.5 1.5L.5 10.5Z" fill="#f4f9fe"/><path d="M.5 12.5V.5H7.5" fill="none" stroke="#a9b9e0"/><path d="M7.5 .5L10.5 3.5V12.5" fill="none" stroke="#6fa8ea"/><path d="M.5 12.5H10.5" fill="none" stroke="#9aa0dc"/><path d="M7.5 .5V3.5H10.5Z" fill="#3a94e6" stroke="#3a94e6" stroke-width=".6"/></svg>
<span class="tx" style="left:79px;top:465px">CONTOURPLATE (59253)</span>
<i class="hl" style="left:56px;top:489px;width:5px"></i>
<b class="bx p" style="left:46px;top:485px"></b>
<svg class="ic" style="left:64px;top:483px" width="12" height="14" viewBox="0 0 12 14"><path d="M1.5 13.5H11.5V4" fill="none" stroke="#9c9c9c" stroke-opacity=".8"/><path d="M.5 .5H7.5L10.5 3.5V12.5H.5Z" fill="#cfe7fb"/><path d="M.5 .5H7.5L8.5 1.5L.5 10.5Z" fill="#f4f9fe"/><path d="M.5 12.5V.5H7.5" fill="none" stroke="#a9b9e0"/><path d="M7.5 .5L10.5 3.5V12.5" fill="none" stroke="#6fa8ea"/><path d="M.5 12.5H10.5" fill="none" stroke="#9aa0dc"/><path d="M7.5 .5V3.5H10.5Z" fill="#3a94e6" stroke="#3a94e6" stroke-width=".6"/></svg>
<span class="tx" style="left:79px;top:481px">BEAM (59271)</span>
<i class="hl" style="left:52px;top:505px;width:9px"></i>
<svg class="ic" style="left:64px;top:499px" width="12" height="14" viewBox="0 0 12 14"><path d="M1.5 13.5H11.5V4" fill="none" stroke="#9c9c9c" stroke-opacity=".8"/><path d="M.5 .5H7.5L10.5 3.5V12.5H.5Z" fill="#cfe7fb"/><path d="M.5 .5H7.5L8.5 1.5L.5 10.5Z" fill="#f4f9fe"/><path d="M.5 12.5V.5H7.5" fill="none" stroke="#a9b9e0"/><path d="M7.5 .5L10.5 3.5V12.5" fill="none" stroke="#6fa8ea"/><path d="M.5 12.5H10.5" fill="none" stroke="#9aa0dc"/><path d="M7.5 .5V3.5H10.5Z" fill="#3a94e6" stroke="#3a94e6" stroke-width=".6"/></svg>
<span class="tx" style="left:79px;top:497px">CUTPLANE (59296)</span>
<i class="hl" style="left:52px;top:521px;width:9px"></i>
<svg class="ic" style="left:64px;top:515px" width="12" height="14" viewBox="0 0 12 14"><path d="M1.5 13.5H11.5V4" fill="none" stroke="#9c9c9c" stroke-opacity=".8"/><path d="M.5 .5H7.5L10.5 3.5V12.5H.5Z" fill="#cfe7fb"/><path d="M.5 .5H7.5L8.5 1.5L.5 10.5Z" fill="#f4f9fe"/><path d="M.5 12.5V.5H7.5" fill="none" stroke="#a9b9e0"/><path d="M7.5 .5L10.5 3.5V12.5" fill="none" stroke="#6fa8ea"/><path d="M.5 12.5H10.5" fill="none" stroke="#9aa0dc"/><path d="M7.5 .5V3.5H10.5Z" fill="#3a94e6" stroke="#3a94e6" stroke-width=".6"/></svg>
<span class="tx" style="left:79px;top:513px">CUTPLANE (59301)</span>
<div class="sb" style="left:235px;top:1px;width:16px;height:518px;background:linear-gradient(90deg,#e9e9e9,#f3f3f3 45%,#efefef)"></div>
<div class="sb" style="left:1px;top:520px;width:234px;height:16px;background:linear-gradient(#e9e9e9,#f3f3f3 45%,#efefef)"></div>
<div class="sb" style="left:234px;top:519px;width:17px;height:17px;background:#f0f0f0"></div>
<div class="sb" style="left:0;top:519px;width:234px;height:1px;background:#fff"></div>
<div class="thumb" style="left:235px;top:415px;width:15px;height:15px"></div>
<div class="thumbh" style="left:19px;top:520px;width:190px;height:15px"></div>
<i class="ar" style="left:240px;top:8px;border-bottom:4px solid #3a3a3a;border-top:none"></i>
<i class="ar" style="left:240px;top:509px;border-top:4px solid #3a3a3a;border-bottom:none"></i>
<i class="ar" style="left:7px;top:524px;border-right:4px solid #3a3a3a;border-left:none"></i>
<i class="ar" style="left:224px;top:524px;border-left:4px solid #3a3a3a;border-right:none"></i>
<i class="a" style="left:110px;top:524px;width:7px;height:7px;background-image:linear-gradient(90deg,#606060 50%,transparent 50%);background-size:2px 7px"></i>

</div>
<div id="grid">
<div class="hd" style="left:0px;width:70px"><span style="left:8px">Идентифика</span></div>
<div class="hd" style="left:70px;width:71px"><span style="left:7px">Транзакция</span></div>
<div class="hd" style="left:141px;width:71px"><span style="left:6px">Свойство</span></div>
<div class="hd two" style="left:212px;width:70px"><span style="left:7px">Тип<br>свойства</span></div>
<div class="hd two" style="left:282px;width:71px"><span style="left:6px">Значение<br>свойства</span></div>
<div class="hd" style="left:353px;width:72px"><span style="left:6px">Ед. изм.</span></div>
<div class="hd" style="left:425px;width:71px"><span style="left:6px">Хозяин</span></div>
<div class="hd two" style="left:496px;width:72px"><span style="left:7px">Базовый<br>тип</span></div>
<div class="rw sel" style="top:33px">
<span class="c" style="left:0px;width:69px">27000</span>
<span class="c" style="left:70px;width:70px">1</span>
<span class="c" style="left:141px;width:70px">ASSEMBL...</span>
<span class="c" style="left:212px;width:69px">CHARACT...</span>
<span class="c" style="left:282px;width:70px">Б1-2</span>
<span class="c" style="left:425px;width:70px">59235</span>
<span class="c" style="left:496px;width:71px">CONTOUR...</span>
</div>
<div class="rw" style="top:55px">
<span class="c" style="left:0px;width:69px">27001</span>
<span class="c" style="left:70px;width:70px">1</span>
<span class="c" style="left:141px;width:70px">MATERIAL</span>
<span class="c" style="left:212px;width:69px">CHARACT...</span>
<span class="c" style="left:282px;width:70px">С345-3</span>
<span class="c" style="left:425px;width:70px">59235</span>
<span class="c" style="left:496px;width:71px">CONTOUR...</span>
</div>
<div class="rw" style="top:77px">
<span class="c" style="left:0px;width:69px">27002</span>
<span class="c" style="left:70px;width:70px">1</span>
<span class="c" style="left:141px;width:70px">ID</span>
<span class="c" style="left:212px;width:69px">INTEGER</span>
<span class="c" style="left:282px;width:70px">59253</span>
<span class="c" style="left:425px;width:70px">59253</span>
<span class="c" style="left:496px;width:71px">CONTOUR...</span>
</div>
<div class="rw" style="top:99px">
<span class="c" style="left:0px;width:69px">27003</span>
<span class="c" style="left:70px;width:70px">1</span>
<span class="c" style="left:141px;width:70px">PROFILE</span>
<span class="c" style="left:212px;width:69px">CHARACT...</span>
<span class="c" style="left:282px;width:70px">−20*260</span>
<span class="c" style="left:425px;width:70px">59253</span>
<span class="c" style="left:496px;width:71px">CONTOUR...</span>
</div>
<div class="rw" style="top:121px">
<span class="c" style="left:0px;width:69px">27004</span>
<span class="c" style="left:70px;width:70px">1</span>
<span class="c" style="left:141px;width:70px">ASSEMBL...</span>
<span class="c" style="left:212px;width:69px">CHARACT...</span>
<span class="c" style="left:282px;width:70px">Б1</span>
<span class="c" style="left:425px;width:70px">59253</span>
<span class="c" style="left:496px;width:71px">CONTOUR...</span>
</div>
<div class="rw" style="top:143px">
<span class="c" style="left:0px;width:69px">27005</span>
<span class="c" style="left:70px;width:70px">1</span>
<span class="c" style="left:141px;width:70px">CLASS_AT...</span>
<span class="c" style="left:212px;width:69px">CHARACT...</span>
<span class="c" style="left:282px;width:70px">99</span>
<span class="c" style="left:425px;width:70px">59253</span>
<span class="c" style="left:496px;width:71px">CONTOUR...</span>
</div>
<div class="rw" style="top:165px">
<span class="c" style="left:0px;width:69px">27006</span>
<span class="c" style="left:70px;width:70px">1</span>
<span class="c" style="left:141px;width:70px">PART_POS</span>
<span class="c" style="left:212px;width:69px">CHARACT...</span>
<span class="c" style="left:282px;width:70px">136</span>
<span class="c" style="left:425px;width:70px">59253</span>
<span class="c" style="left:496px;width:71px">CONTOUR...</span>
</div>
<div class="rw" style="top:187px">
<span class="c" style="left:0px;width:69px">27007</span>
<span class="c" style="left:70px;width:70px">1</span>
<span class="c" style="left:141px;width:70px">ASSEMBL...</span>
<span class="c" style="left:212px;width:69px">CHARACT...</span>
<span class="c" style="left:282px;width:70px">Б1-2</span>
<span class="c" style="left:425px;width:70px">59253</span>
<span class="c" style="left:496px;width:71px">CONTOUR...</span>
</div>
<div class="rw" style="top:209px">
<span class="c" style="left:0px;width:69px">27008</span>
<span class="c" style="left:70px;width:70px">1</span>
<span class="c" style="left:141px;width:70px">MATERIAL</span>
<span class="c" style="left:212px;width:69px">CHARACT...</span>
<span class="c" style="left:282px;width:70px">С345-3</span>
<span class="c" style="left:425px;width:70px">59253</span>
<span class="c" style="left:496px;width:71px">CONTOUR...</span>
</div>
<div class="rw" style="top:231px">
<span class="c" style="left:0px;width:69px">27009</span>
<span class="c" style="left:70px;width:70px">1</span>
<span class="c" style="left:141px;width:70px">ID</span>
<span class="c" style="left:212px;width:69px">INTEGER</span>
<span class="c" style="left:282px;width:70px">59271</span>
<span class="c" style="left:425px;width:70px">59271</span>
<span class="c" style="left:496px;width:71px">BEAM</span>
</div>
<div class="rw" style="top:253px">
<span class="c" style="left:0px;width:69px">27010</span>
<span class="c" style="left:70px;width:70px">1</span>
<span class="c" style="left:141px;width:70px">PROFILE</span>
<span class="c" style="left:212px;width:69px">CHARACT...</span>
<span class="c" style="left:282px;width:70px">I 25 Ш1</span>
<span class="c" style="left:425px;width:70px">59271</span>
<span class="c" style="left:496px;width:71px">BEAM</span>
</div>
<div class="rw" style="top:275px">
<span class="c" style="left:0px;width:69px">27011</span>
<span class="c" style="left:70px;width:70px">1</span>
<span class="c" style="left:141px;width:70px">ASSEMBL...</span>
<span class="c" style="left:212px;width:69px">CHARACT...</span>
<span class="c" style="left:282px;width:70px">Б1</span>
<span class="c" style="left:425px;width:70px">59271</span>
<span class="c" style="left:496px;width:71px">BEAM</span>
</div>
<div class="rw" style="top:297px">
<span class="c" style="left:0px;width:69px">27012</span>
<span class="c" style="left:70px;width:70px">1</span>
<span class="c" style="left:141px;width:70px">CLASS_AT...</span>
<span class="c" style="left:212px;width:69px">CHARACT...</span>
<span class="c" style="left:282px;width:70px">5</span>
<span class="c" style="left:425px;width:70px">59271</span>
<span class="c" style="left:496px;width:71px">BEAM</span>
</div>
<div class="rw" style="top:319px">
<span class="c" style="left:0px;width:69px">27013</span>
<span class="c" style="left:70px;width:70px">1</span>
<span class="c" style="left:141px;width:70px">PART_POS</span>
<span class="c" style="left:212px;width:69px">CHARACT...</span>
<span class="c" style="left:282px;width:70px">200</span>
<span class="c" style="left:425px;width:70px">59271</span>
<span class="c" style="left:496px;width:71px">BEAM</span>
</div>
<div class="rw" style="top:341px">
<span class="c" style="left:0px;width:69px">27014</span>
<span class="c" style="left:70px;width:70px">1</span>
<span class="c" style="left:141px;width:70px">NAME</span>
<span class="c" style="left:212px;width:69px">CHARACT...</span>
<span class="c" style="left:282px;width:70px">Балка</span>
<span class="c" style="left:425px;width:70px">59271</span>
<span class="c" style="left:496px;width:71px">BEAM</span>
</div>
<div class="rw" style="top:363px">
<span class="c" style="left:0px;width:69px">27015</span>
<span class="c" style="left:70px;width:70px">1</span>
<span class="c" style="left:141px;width:70px">ASSEMBL...</span>
<span class="c" style="left:212px;width:69px">CHARACT...</span>
<span class="c" style="left:282px;width:70px">Б1-1</span>
<span class="c" style="left:425px;width:70px">59271</span>
<span class="c" style="left:496px;width:71px">BEAM</span>
</div>
<div class="rw" style="top:385px">
<span class="c" style="left:0px;width:69px">27016</span>
<span class="c" style="left:70px;width:70px">1</span>
<span class="c" style="left:141px;width:70px">MATERIAL</span>
<span class="c" style="left:212px;width:69px">CHARACT...</span>
<span class="c" style="left:282px;width:70px">С245</span>
<span class="c" style="left:425px;width:70px">59271</span>
<span class="c" style="left:496px;width:71px">BEAM</span>
</div>
<div class="rw" style="top:407px">
<span class="c" style="left:0px;width:69px">27017</span>
<span class="c" style="left:70px;width:70px">1</span>
<span class="c" style="left:141px;width:70px">ID</span>
<span class="c" style="left:212px;width:69px">INTEGER</span>
<span class="c" style="left:282px;width:70px">59306</span>
<span class="c" style="left:425px;width:70px">59306</span>
<span class="c" style="left:496px;width:71px">CONTOUR...</span>
</div>
<div class="rw" style="top:429px">
<span class="c" style="left:0px;width:69px">27018</span>
<span class="c" style="left:70px;width:70px">1</span>
<span class="c" style="left:141px;width:70px">PROFILE</span>
<span class="c" style="left:212px;width:69px">CHARACT...</span>
<span class="c" style="left:282px;width:70px">−20*260</span>
<span class="c" style="left:425px;width:70px">59306</span>
<span class="c" style="left:496px;width:71px">CONTOUR...</span>
</div>
<div class="rw" style="top:451px">
<span class="c" style="left:0px;width:69px">27019</span>
<span class="c" style="left:70px;width:70px">1</span>
<span class="c" style="left:141px;width:70px">ASSEMBL...</span>
<span class="c" style="left:212px;width:69px">CHARACT...</span>
<span class="c" style="left:282px;width:70px">Б1</span>
<span class="c" style="left:425px;width:70px">59306</span>
<span class="c" style="left:496px;width:71px">CONTOUR...</span>
</div>
<div class="rw" style="top:473px">
<span class="c" style="left:0px;width:69px">27020</span>
<span class="c" style="left:70px;width:70px">1</span>
<span class="c" style="left:141px;width:70px">CLASS_AT...</span>
<span class="c" style="left:212px;width:69px">CHARACT...</span>
<span class="c" style="left:282px;width:70px">99</span>
<span class="c" style="left:425px;width:70px">59306</span>
<span class="c" style="left:496px;width:71px">CONTOUR...</span>
</div>
<div class="rw" style="top:495px">
<span class="c" style="left:0px;width:69px">27021</span>
<span class="c" style="left:70px;width:70px">1</span>
<span class="c" style="left:141px;width:70px">PART_POS</span>
<span class="c" style="left:212px;width:69px">CHARACT...</span>
<span class="c" style="left:282px;width:70px">136</span>
<span class="c" style="left:425px;width:70px">59306</span>
<span class="c" style="left:496px;width:71px">CONTOUR...</span>
</div>
<i class="gl" style="left:69px"></i>
<i class="gl" style="left:140px"></i>
<i class="gl" style="left:211px"></i>
<i class="gl" style="left:281px"></i>
<i class="gl" style="left:352px"></i>
<i class="gl" style="left:424px"></i>
<i class="gl" style="left:495px"></i>
<i class="gl" style="left:567px"></i>
<i class="a" style="left:0;top:31px;width:568px;height:1px;background:#d5d5d5"></i>
<i class="a" style="left:0;top:32px;width:568px;height:1px;background:#a0a0a0"></i>
<div class="sb" style="left:569px;top:-1px;width:17px;height:514px;background:linear-gradient(90deg,#e9e9e9,#f3f3f3 45%,#efefef)"></div>
<div class="thumb" style="left:569px;top:418px;width:15px;height:15px"></div>
<i class="ar" style="left:574px;top:6px;border-bottom:4px solid #3a3a3a;border-top:none"></i>
<i class="ar" style="left:574px;top:502px;border-top:4px solid #3a3a3a;border-bottom:none"></i>

</div>
</body></html>
